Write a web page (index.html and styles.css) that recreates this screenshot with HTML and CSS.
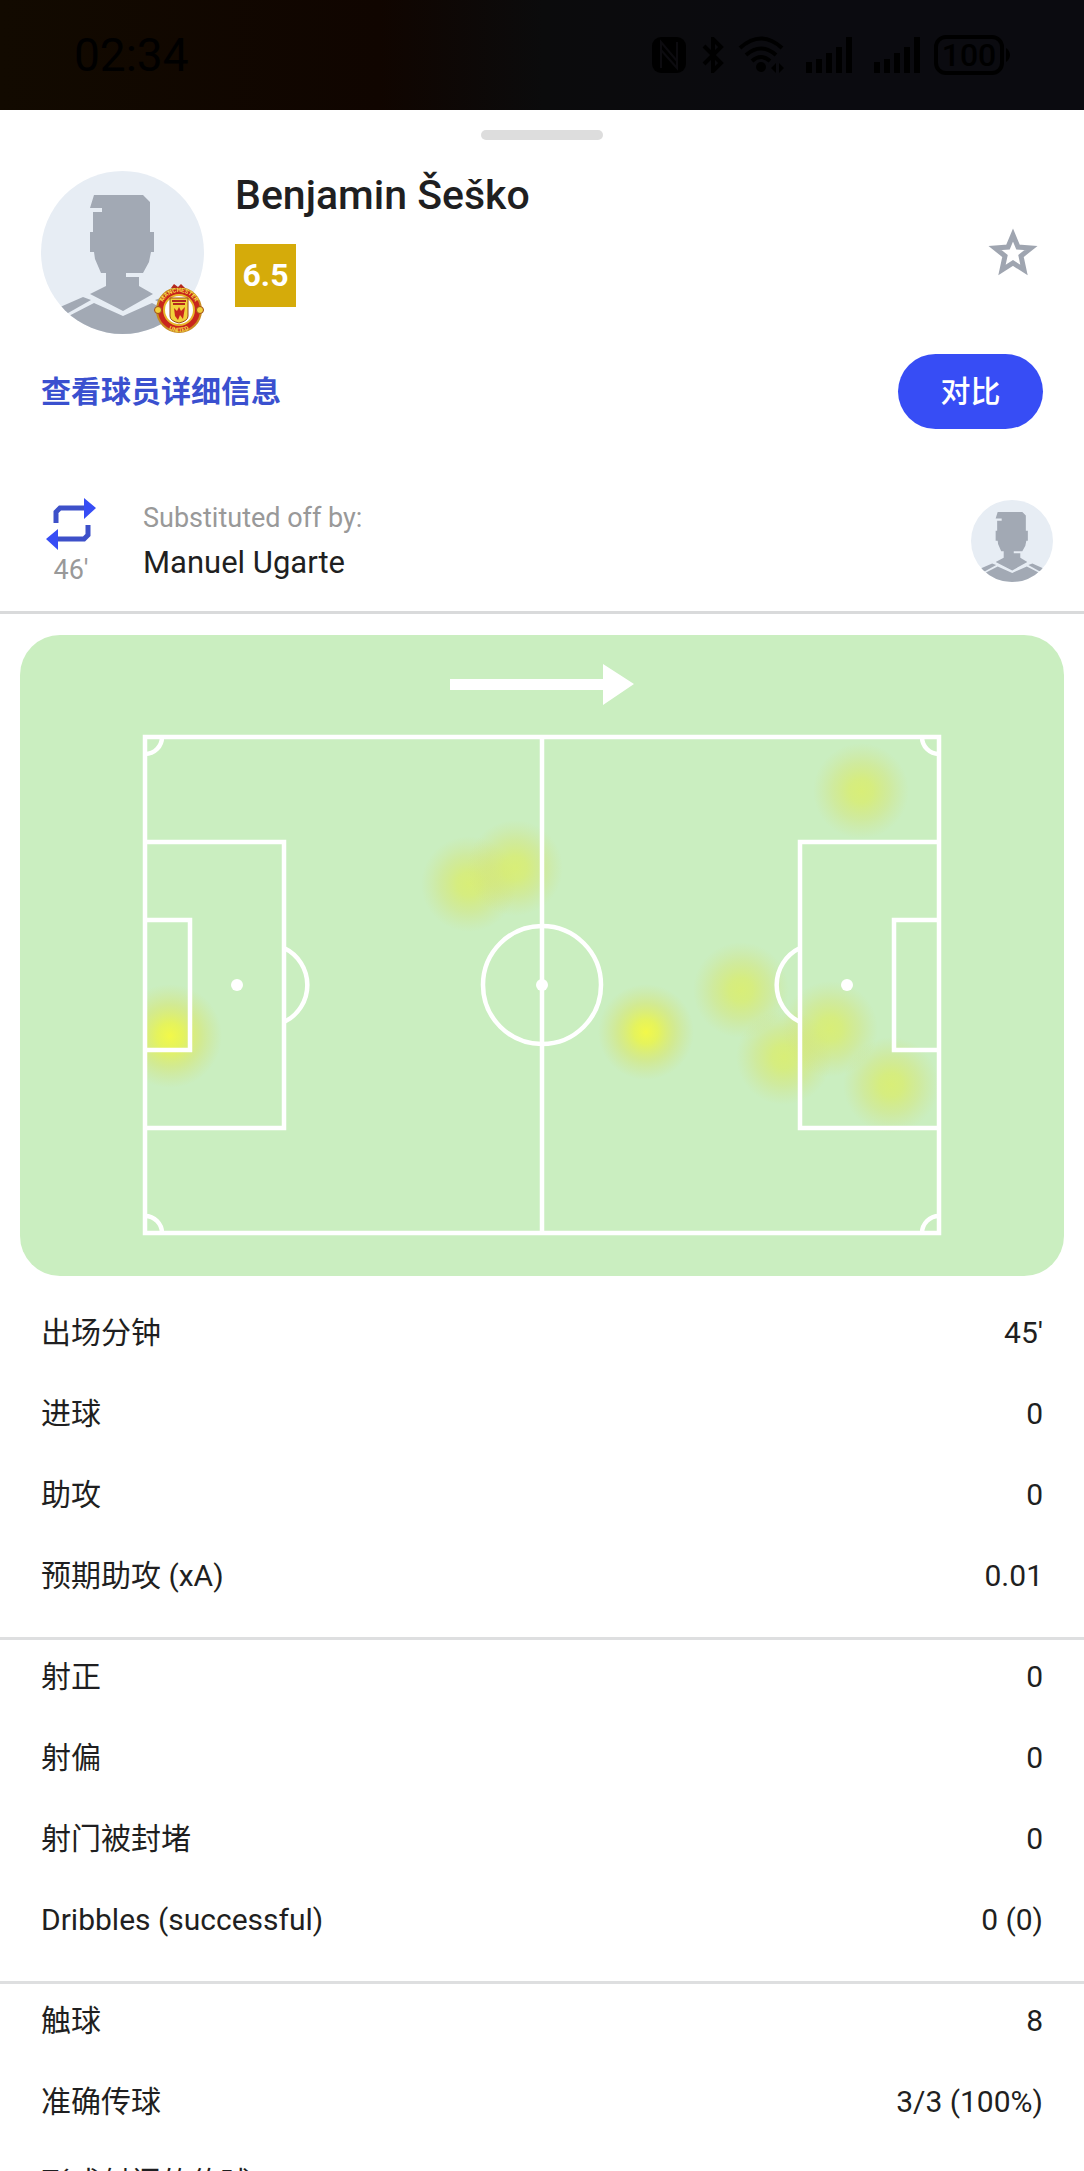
FILE: index.html
```html
<!DOCTYPE html>
<html lang="zh-CN">
<head>
  <meta charset="UTF-8">
  <meta name="viewport" content="width=device-width, initial-scale=1.0">
  <title>Benjamin Šeško</title>
  <link rel="stylesheet" href="styles.css">
</head>
<body>
  <!-- shared avatar placeholder -->
  <svg class="defs" width="0" height="0" aria-hidden="true">
    <symbol id="avatar" viewBox="0 0 163 163">
      <clipPath id="round"><circle cx="81.5" cy="81.5" r="81.5"/></clipPath>
      <g clip-path="url(#round)">
        <rect width="163" height="163" fill="#e7edf4"/>
        <g fill="#a2a9b4">
          <path d="M53 24H102L109 31V61H113V81H110L108 91L102 102H85V106H98V115L112 123L82 140L49 123L65 115V102H60L54 88L53 81H49V61H52V41H61V37H49Z"/>
          <path d="M10 140L42 126L50 129L20 146Z"/>
          <path d="M153 140L122 126L114 129L144 146Z"/>
          <path d="M20 149L53 132L82 145L111 132L144 149V163H20Z"/>
        </g>
      </g>
    </symbol>
  </svg>

  <header class="status-bar">
    <span class="time">02:34</span>
    <div class="status-icons">
      <svg width="34" height="36" viewBox="0 0 34 36"><rect width="34" height="36" rx="9"/><path d="M9 31V5L25 24M9 13L25 31V5" fill="none" stroke="#0c0b0f" stroke-width="2"/></svg>
      <svg class="bluetooth" width="22" height="36" viewBox="0 0 22 36"><path d="M2 9L19 26L11 34V2L19 10L2 27" fill="none" stroke="#000" stroke-width="4"/></svg>
      <svg class="wifi" width="46" height="38" viewBox="0 0 46 38"><path d="M2 12Q23-7 44 12M8 19Q23 6 38 19M14 25Q23 17 32 25" fill="none" stroke="#000" stroke-width="4"/><circle cx="23" cy="31" r="5"/><path d="M33 32L38 27V37ZM46 32L41 27V37Z"/></svg>
      <svg class="signal" width="46" height="36" viewBox="0 0 46 36"><path d="M0 25H6V36H0ZM10 22H16V36H10ZM20 16H26V36H20ZM30 10H36V36H30ZM40 0H46V36H40Z"/></svg>
      <svg class="signal" width="46" height="36" viewBox="0 0 46 36"><path d="M0 25H6V36H0ZM10 22H16V36H10ZM20 16H26V36H20ZM30 10H36V36H30ZM40 0H46V36H40Z"/></svg>
      <span class="battery">100</span>
      <svg width="6" height="14" viewBox="0 0 6 14"><path d="M2 0Q6 3 6 7Q6 11 2 14Z"/></svg>
    </div>
  </header>

  <main class="sheet">
    <div class="handle"></div>

    <section class="player">
      <div class="photo">
        <svg class="avatar" role="img" aria-label="Benjamin Šeško"><use href="#avatar"/></svg>
        <svg class="club" viewBox="0 0 50 50" role="img" aria-label="Manchester United">
          <path id="arc-top" d="M7 26A18 18 0 0 1 43 26" fill="none"/>
          <path id="arc-bottom" d="M3 26A22 22 0 0 0 47 26" fill="none"/>
          <circle cx="25" cy="26" r="22" fill="#c8261c" stroke="#c98b22" stroke-width="2"/>
          <circle cx="25" cy="26" r="15" fill="#fff" stroke="#e8b52a" stroke-width="2"/>
          <path d="M17 4L20 0L24 3L27 0L31 4Z" fill="#b3281d"/>
          <g fill="#f2d13c" stroke="#9d4a18">
            <circle cx="4" cy="26" r="3.500"/>
            <circle cx="46" cy="26" r="3.500"/>
            <path d="M16 14H34V32Q34 37 25 39Q16 37 16 32Z"/>
          </g>
          <path d="M18 17H32M19 20H31" stroke="#b3281d" stroke-width="2"/>
          <path d="M20 24L23 27L25 23L27 27L31 23L29 35L26 31L24 36L21 32Z" fill="#c8261c"/>
          <text class="club-text"><textPath href="#arc-top" startOffset="50%">MANCHESTER</textPath></text>
          <text class="club-text"><textPath href="#arc-bottom" startOffset="50%">UNITED</textPath></text>
        </svg>
      </div>
      <div class="player-info">
        <h1>Benjamin Šeško</h1>
        <span class="rating">6.5</span>
      </div>
      <button class="favourite" aria-label="收藏">
        <svg width="50" height="50" viewBox="0 0 50 50"><path d="M25 7L30 19L43 20L33 28L36 42L25 35L14 42L17 28L7 20L20 19Z" fill="none" stroke="#9fa5b0" stroke-width="5"/></svg>
      </button>
    </section>

    <div class="actions">
      <a href="#">查看球员详细信息</a>
      <button class="compare">对比</button>
    </div>

    <section class="substitution">
      <div class="sub-minute">
        <svg width="50" height="52" viewBox="0 0 50 52">
          <path d="M10 25V14L14 10H38M42 27V37L38 41H12" fill="none" stroke="#3d50c9" stroke-width="5"/>
          <path d="M38 0L50 10L38 21ZM12 31L0 41L12 52Z" fill="#374df5"/>
        </svg>
        <span>46'</span>
      </div>
      <div class="sub-player">
        <span class="sub-label">Substituted off by:</span>
        <span class="sub-name">Manuel Ugarte</span>
      </div>
      <svg class="avatar small" role="img" aria-label="Manuel Ugarte"><use href="#avatar"/></svg>
    </section>

    <section class="heatmap">
      <svg viewBox="0 0 1044 641" role="img" aria-label="热图">
        <defs>
          <radialGradient id="heat">
            <stop offset="0" stop-color="#deee5c" stop-opacity=".72"/>
            <stop offset=".25" stop-color="#dcec5c" stop-opacity=".64"/>
            <stop offset=".6" stop-color="#d8e464" stop-opacity=".36"/>
            <stop offset="1" stop-color="#d4e078" stop-opacity="0"/>
          </radialGradient>
          <radialGradient id="hot">
            <stop offset="0" stop-color="#f4f944" stop-opacity=".96"/>
            <stop offset=".25" stop-color="#eaf44a" stop-opacity=".84"/>
            <stop offset=".6" stop-color="#dae664" stop-opacity=".5"/>
            <stop offset="1" stop-color="#d4e078" stop-opacity="0"/>
          </radialGradient>
          <clipPath id="field"><rect x="125" y="102" width="794" height="496"/></clipPath>
        </defs>

        <g clip-path="url(#field)" fill="url(#heat)">
          <circle cx="449" cy="249" r="48"/>
          <circle cx="495" cy="233" r="48"/>
          <circle cx="841" cy="156" r="48"/>
          <circle cx="721" cy="355" r="48"/>
          <circle cx="764" cy="422" r="48"/>
          <circle cx="810" cy="394" r="48"/>
          <circle cx="871" cy="450" r="48"/>
          <circle cx="150" cy="401" r="52" fill="url(#hot)"/>
          <circle cx="626" cy="397" r="48" fill="url(#hot)"/>
        </g>

        <!-- direction of play -->
        <path d="M430 44H583V29L614 49L583 70V55H430Z" fill="#fff"/>

        <g fill="none" stroke="#fff" stroke-width="4.500">
          <rect x="125" y="102" width="794" height="496"/>
          <path d="M522 102V598"/>
          <circle cx="522" cy="350" r="59"/>
          <path d="M125 207H264V493H125M125 285H170V415H125"/>
          <path d="M919 207H780V493H919M919 285H874V415H919"/>
          <path d="M264 313A41 41 0 0 1 264 387M780 313A41 41 0 0 0 780 387"/>
          <path d="M142 102A17 17 0 0 1 125 119M902 102A17 17 0 0 0 919 119M125 581A17 17 0 0 1 142 598M919 581A17 17 0 0 0 902 598"/>
        </g>
        <g fill="#fff">
          <circle cx="217" cy="350" r="6"/>
          <circle cx="522" cy="350" r="6"/>
          <circle cx="827" cy="350" r="6"/>
        </g>
      </svg>
    </section>

    <section class="stats">
      <table>
        <tr><th scope="row">出场分钟</th><td>45'</td></tr>
        <tr><th scope="row">进球</th><td>0</td></tr>
        <tr><th scope="row">助攻</th><td>0</td></tr>
        <tr><th scope="row">预期助攻 (xA)</th><td>0.01</td></tr>
      </table>
    </section>

    <section class="stats">
      <table>
        <tr><th scope="row">射正</th><td>0</td></tr>
        <tr><th scope="row">射偏</th><td>0</td></tr>
        <tr><th scope="row">射门被封堵</th><td>0</td></tr>
        <tr><th scope="row">Dribbles (successful)</th><td>0 (0)</td></tr>
      </table>
    </section>

    <section class="stats">
      <table>
        <tr><th scope="row">触球</th><td>8</td></tr>
        <tr><th scope="row">准确传球</th><td>3/3 (100%)</td></tr>
        <tr><th scope="row">形成射门的传球</th><td>0</td></tr>
      </table>
    </section>
  </main>
</body>
</html>
```
FILE: styles.css
```css
* {
  box-sizing: border-box;
}
body {
  margin: 0;
  height: 100vh;
  overflow: hidden;
  background-color: #fff;
  color: #1f1f21;
  font-family: Roboto, "Noto Sans CJK SC", sans-serif;
  font-size: 30px;
  line-height: 41px;
}
button {
  border: none;
  padding: 0;
  background: none;
  font: inherit;
  cursor: pointer;
}
svg {
  display: block;
}
.defs {
  position: absolute;
}

/* status bar */
.status-bar {
  display: flex;
  justify-content: space-between;
  align-items: center;
  height: 110px;
  padding: 0 74px;
  background: linear-gradient(90deg, #120a00, #100500 35%, #0b0b0c 50%, #0b0b10 75%, #0b0b10);
  color: #000;
}
.time {
  font-size: 46px;
}
.status-icons {
  display: flex;
  align-items: center;
}
.bluetooth {
  margin-left: 16px;
}
.wifi {
  margin-left: 14px;
}
.signal {
  margin-left: 22px;
}
.battery {
  width: 70px;
  height: 40px;
  margin-left: 14px;
  border: 4px solid #000;
  border-radius: 12px;
  font-size: 32px;
  font-weight: 500;
  line-height: 32px;
  text-align: center;
}

/* player header */
.handle {
  width: 122px;
  height: 10px;
  margin: 20px auto 31px;
  border-radius: 5px;
  background-color: #ddd;
}
.player {
  display: flex;
  padding: 0 41px;
}
.photo {
  position: relative;
}
.avatar {
  width: 163px;
  height: 163px;
}
.club {
  position: absolute;
  right: 0;
  bottom: 0;
  width: 50px;
  height: 50px;
}
.club-text {
  fill: #f9dc4a;
  font-size: 6px;
  font-weight: 700;
  text-anchor: middle;
}
.player-info {
  flex: 1;
  padding-left: 31px;
}
h1 {
  margin: 0 0 25px;
  font-size: 41px;
  font-weight: 500;
  line-height: 48px;
}
.rating {
  display: block;
  width: 61px;
  height: 63px;
  background-color: #d5ab0a;
  color: #fff;
  font-size: 32px;
  font-weight: 700;
  line-height: 63px;
  text-align: center;
}
.favourite {
  align-self: center;
  margin-right: 5px;
}
.actions {
  display: flex;
  justify-content: space-between;
  align-items: center;
  margin-top: 20px;
  padding: 0 41px;
}
.actions a {
  color: #3a50cf;
  font-weight: 700;
  text-decoration: none;
}
.compare {
  width: 145px;
  height: 75px;
  border-radius: 38px;
  background-color: #374df5;
  color: #fff;
  font-weight: 500;
}

/* substitution */
.substitution {
  display: flex;
  margin-top: 50px;
  padding: 19px 31px 20px 46px;
  border-bottom: 3px solid #d9dadb;
}
.sub-minute {
  width: 50px;
  margin-right: 47px;
  color: #999;
  font-size: 27px;
  text-align: center;
}
.sub-player {
  display: flex;
  flex: 1;
  flex-direction: column;
  gap: 3px;
}
.sub-label {
  color: #999;
  font-size: 27px;
}
.sub-name {
  font-size: 31px;
}
.small {
  width: 82px;
  height: 82px;
  margin-top: 2px;
}

/* heatmap */
.heatmap {
  margin: 21px 20px 20px;
  border-radius: 40px;
  background-color: #caeec0;
}

/* stats */
.stats {
  padding: 0 41px 17px;
  border-bottom: 3px solid #dedfe0;
}
.stats table {
  width: 100%;
  border-collapse: collapse;
}
.stats th,
.stats td {
  padding: 16px 0 24px;
  font-weight: 400;
  text-align: left;
}
.stats td {
  text-align: right;
}
```
